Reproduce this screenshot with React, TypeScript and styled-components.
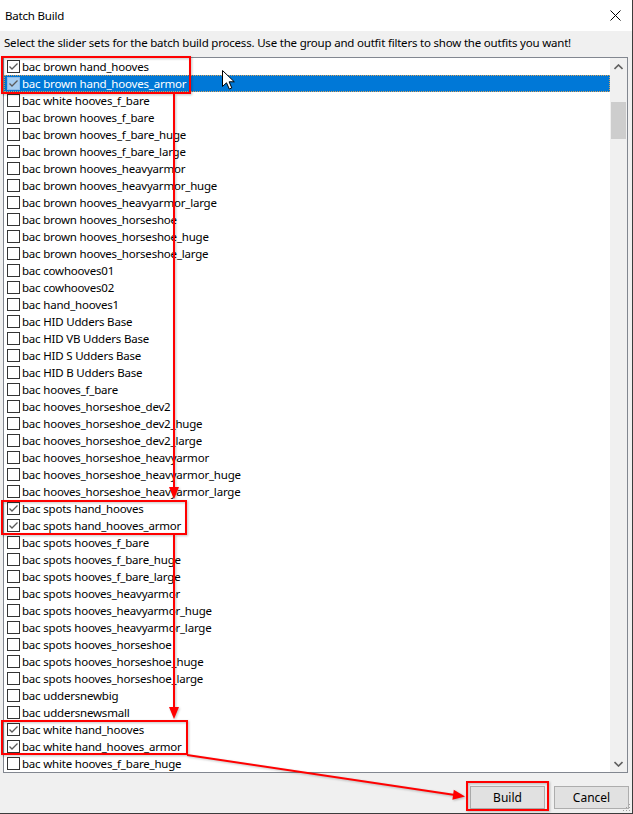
import React from 'react';
import styled, { createGlobalStyle } from 'styled-components';

const GlobalStyle = createGlobalStyle`
  html, body {
    margin: 0;
    padding: 0;
    background: #ffffff;
  }
  body {
    font-family: "Noto Sans", "Liberation Sans", sans-serif;
  }
`;

const Window = styled.div`
  position: relative;
  width: 633px;
  height: 814px;
  box-sizing: border-box;
  background-color: #f0f0f0;
  border-right: 1px solid #3c3c3c;
  border-bottom: 1px solid #3c3c3c;
  display: flex;
  flex-direction: column;
  overflow: hidden;
  font-size: 11.5px;
  letter-spacing: -0.2px;
  color: #000;
`;

const TitleBar = styled.div`
  height: 31px;
  flex-shrink: 0;
  background-color: #ffffff;
  display: flex;
  align-items: center;
  justify-content: space-between;
  padding-left: 5px;
`;

const Title = styled.span`
  line-height: 16px;
`;

const CloseButton = styled.div`
  width: 33px;
  height: 31px;
  display: flex;
  align-items: center;
  justify-content: center;
`;

const Intro = styled.div`
  height: 26px;
  flex-shrink: 0;
  box-sizing: border-box;
  padding: 4px 0 0 4px;
  line-height: 16px;
  white-space: nowrap;
`;

const ListBox = styled.div`
  margin-left: 3px;
  width: 625px;
  height: 716px;
  flex-shrink: 0;
  box-sizing: border-box;
  border: 1px solid #828790;
  background-color: #ffffff;
  display: flex;
`;

const Rows = styled.div`
  flex: 1;
  display: flex;
  flex-direction: column;
  overflow: hidden;
`;

const Row = styled.div<{ $selected: boolean }>`
  height: 17px;
  flex-shrink: 0;
  box-sizing: border-box;
  display: flex;
  align-items: center;
  gap: 2px;
  padding-left: 3px;
  white-space: nowrap;
  line-height: 16px;
  background-color: ${(p) => (p.$selected ? '#0078d7' : 'transparent')};
  color: ${(p) => (p.$selected ? '#ffffff' : '#000000')};
  outline: ${(p) => (p.$selected ? '1px dotted #d9a35a' : 'none')};
  outline-offset: -1px;
`;

const CheckBox = styled.span<{ $selected: boolean }>`
  width: 13px;
  height: 13px;
  flex-shrink: 0;
  box-sizing: border-box;
  border: 1px solid ${(p) => (p.$selected ? '#8fbbe6' : '#333333')};
  background-color: ${(p) => (p.$selected ? '#a6cdf0' : '#ffffff')};
  display: flex;
  align-items: center;
  justify-content: center;
`;

const Label = styled.span``;

const ScrollBar = styled.div`
  width: 17px;
  flex-shrink: 0;
  background-color: #f0f0f0;
  display: flex;
  flex-direction: column;
`;

const ScrollArrow = styled.div`
  height: 17px;
  display: flex;
  align-items: center;
  justify-content: center;
`;

const Thumb = styled.div`
  margin: 27px 1px 0 1px;
  height: 37px;
  background-color: #cdcdcd;
`;

const Track = styled.div`
  flex: 1;
`;

const Footer = styled.div`
  flex: 1;
  display: flex;
  justify-content: flex-end;
  align-items: flex-start;
  gap: 9px;
  padding: 13px 3px 0 0;
`;

const Button = styled.button`
  width: 75px;
  height: 23px;
  box-sizing: border-box;
  padding: 0;
  border: 1px solid #adadad;
  background-color: #e1e1e1;
  font-family: inherit;
  font-size: 12px;
  color: #000;
`;

const Grip = styled.svg`
  position: absolute;
  right: 1px;
  bottom: 1px;
`;

const Overlay = styled.svg`
  position: absolute;
  left: 0;
  top: 0;
  pointer-events: none;
  filter: drop-shadow(1.5px 1.5px 1px rgba(0, 0, 0, 0.25));
`;

const Cursor = styled.svg`
  position: absolute;
  left: 222px;
  top: 70px;
  pointer-events: none;
`;

const outfits: [string, boolean][] = [
  ['bac brown hand_hooves', true],
  ['bac brown hand_hooves_armor', true],
  ['bac white hooves_f_bare', false],
  ['bac brown hooves_f_bare', false],
  ['bac brown hooves_f_bare_huge', false],
  ['bac brown hooves_f_bare_large', false],
  ['bac brown hooves_heavyarmor', false],
  ['bac brown hooves_heavyarmor_huge', false],
  ['bac brown hooves_heavyarmor_large', false],
  ['bac brown hooves_horseshoe', false],
  ['bac brown hooves_horseshoe_huge', false],
  ['bac brown hooves_horseshoe_large', false],
  ['bac cowhooves01', false],
  ['bac cowhooves02', false],
  ['bac hand_hooves1', false],
  ['bac HID Udders Base', false],
  ['bac HID VB Udders Base', false],
  ['bac HID S Udders Base', false],
  ['bac HID B Udders Base', false],
  ['bac hooves_f_bare', false],
  ['bac hooves_horseshoe_dev2', false],
  ['bac hooves_horseshoe_dev2_huge', false],
  ['bac hooves_horseshoe_dev2_large', false],
  ['bac hooves_horseshoe_heavyarmor', false],
  ['bac hooves_horseshoe_heavyarmor_huge', false],
  ['bac hooves_horseshoe_heavyarmor_large', false],
  ['bac spots hand_hooves', true],
  ['bac spots hand_hooves_armor', true],
  ['bac spots hooves_f_bare', false],
  ['bac spots hooves_f_bare_huge', false],
  ['bac spots hooves_f_bare_large', false],
  ['bac spots hooves_heavyarmor', false],
  ['bac spots hooves_heavyarmor_huge', false],
  ['bac spots hooves_heavyarmor_large', false],
  ['bac spots hooves_horseshoe', false],
  ['bac spots hooves_horseshoe_huge', false],
  ['bac spots hooves_horseshoe_large', false],
  ['bac uddersnewbig', false],
  ['bac uddersnewsmall', false],
  ['bac white hand_hooves', true],
  ['bac white hand_hooves_armor', true],
  ['bac white hooves_f_bare_huge', false],
];

const SELECTED = 1;
const RED = '#f00';

function Check() {
  return (
    <svg width="11" height="11" viewBox="0 0 11 11">
      <polyline points="1.5,5.5 4,8 9.5,2.5" fill="none" stroke="#5a5a5a" strokeWidth="1.3" />
    </svg>
  );
}

export default function App() {
  return (
    <Window>
      <GlobalStyle />
      <TitleBar>
        <Title>Batch Build</Title>
        <CloseButton>
          <svg width="11" height="11" viewBox="0 0 11 11">
            <path d="M0.5 0.5 L10.5 10.5 M10.5 0.5 L0.5 10.5" stroke="#000" strokeWidth="1" />
          </svg>
        </CloseButton>
      </TitleBar>
      <Intro>
        Select the slider sets for the batch build process. Use the group and outfit filters to show the outfits you want!
      </Intro>
      <ListBox>
        <Rows>
          {outfits.map(([name, checked], i) => (
            <Row key={name} $selected={i === SELECTED}>
              <CheckBox $selected={i === SELECTED}>{checked ? <Check /> : null}</CheckBox>
              <Label>{name}</Label>
            </Row>
          ))}
        </Rows>
        <ScrollBar>
          <ScrollArrow>
            <svg width="9" height="6" viewBox="0 0 9 6">
              <polyline points="0.5,5 4.5,1 8.5,5" fill="none" stroke="#606060" strokeWidth="1.6" />
            </svg>
          </ScrollArrow>
          <Thumb />
          <Track />
          <ScrollArrow>
            <svg width="9" height="6" viewBox="0 0 9 6">
              <polyline points="0.5,1 4.5,5 8.5,1" fill="none" stroke="#606060" strokeWidth="1.6" />
            </svg>
          </ScrollArrow>
        </ScrollBar>
      </ListBox>
      <Footer>
        <Button>Build</Button>
        <Button>Cancel</Button>
      </Footer>
      <Grip width="8" height="8" viewBox="0 0 8 8">
        <rect x="6" y="0" width="1" height="1" fill="#a0a0a0" />
        <rect x="3" y="3" width="1" height="1" fill="#a0a0a0" />
        <rect x="6" y="3" width="1" height="1" fill="#a0a0a0" />
        <rect x="0" y="6" width="1" height="1" fill="#a0a0a0" />
        <rect x="3" y="6" width="1" height="1" fill="#a0a0a0" />
        <rect x="6" y="6" width="1" height="1" fill="#a0a0a0" />
      </Grip>

      {/* red annotations drawn over the dialog */}
      <Overlay width="633" height="814" viewBox="0 0 633 814">
        <g fill="none" stroke={RED} strokeWidth="2">
          <rect x="2" y="57" width="188" height="36" />
          <rect x="2" y="501" width="184" height="33" />
          <rect x="2" y="721" width="185" height="33" />
          <rect x="467" y="782" width="81" height="28" />
          <line x1="174" y1="94" x2="174" y2="489" />
          <line x1="174" y1="535" x2="174" y2="709" />
          <line x1="187" y1="755" x2="455" y2="795" />
        </g>
        <g fill={RED}>
          <polygon points="169,487 179,487 174,499" />
          <polygon points="169,707 179,707 174,719" />
          <polygon points="465,796.5 452.4,799.7 453.8,789.8" />
        </g>
      </Overlay>
      <Cursor width="14" height="21" viewBox="0 0 14 21">
        <path
          d="M0.5 0.5 L0.5 16.5 L4.5 12.8 L7.3 19 L9.8 17.9 L7.1 11.8 L12.3 11.8 Z"
          fill="#fff"
          stroke="#000"
          strokeWidth="1"
          strokeLinejoin="round"
        />
      </Cursor>
    </Window>
  );
}
